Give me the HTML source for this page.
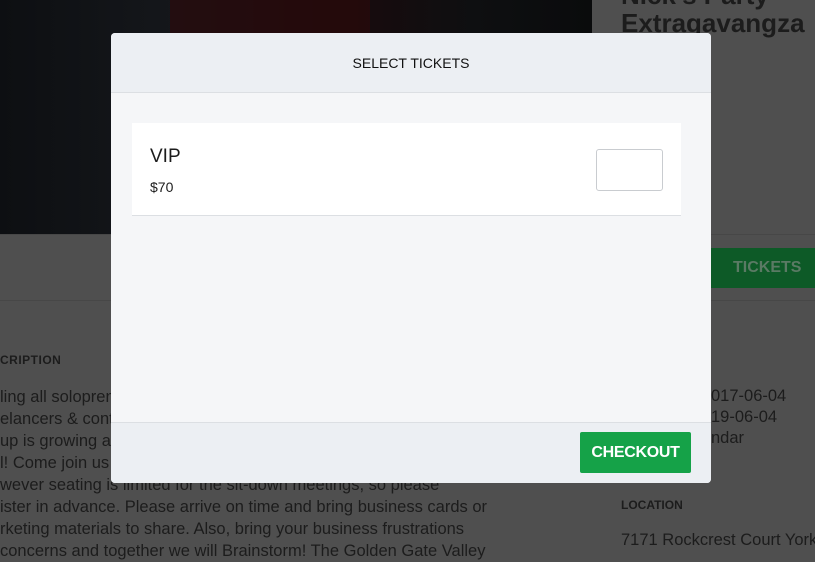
<!DOCTYPE html>
<html><head><style>
*{margin:0;padding:0;box-sizing:border-box}
body{width:815px;height:554px;overflow:hidden;background:#4f4f4f;font-family:"Liberation Sans",sans-serif;position:relative;color:#1e1e1e}
.a{position:absolute}
.t{position:absolute;color:#1c1c1c;white-space:nowrap}
</style></head><body>
<div class="a" style="left:0;top:0;width:592px;height:234px;background:linear-gradient(90deg,#0d0f12 0%,#15171b 30%,#1a0a0c 55%,#0e0f11 80%,#0a0b0c 100%)"></div>
<div class="a" style="left:170px;top:0;width:200px;height:40px;background:#2a0a0c;opacity:.7"></div>
<div class="a" style="left:0;top:234px;width:815px;height:1px;background:#474747"></div>
<div class="a" style="left:0;top:300px;width:815px;height:1px;background:#474747"></div>
<div class="t" style="left:621px;top:-20px;font-size:26px;font-weight:bold;line-height:30px">Nick's Party</div>
<div class="t" style="left:621px;top:8px;font-size:26px;font-weight:bold;line-height:30px">Extragavangza</div>
<div class="a" style="left:711px;top:248px;width:104px;height:40px;background:#0d5a27"></div>
<div class="t" style="left:733px;top:259px;font-size:16px;font-weight:bold;color:#5a7a64">TICKETS</div>
<div class="t" style="left:0;top:353px;font-size:12px;font-weight:bold;letter-spacing:.5px">CRIPTION</div>
<div class="t" style="left:678px;top:353px;font-size:12px;font-weight:bold">E</div>
<div class="t" style="left:0;top:386px;font-size:16.5px;line-height:22px">ling all solopren<br>elancers &amp; cont<br>up is growing a<br>l! Come join us<br>wever seating is limited for the sit-down meetings, so please<br>ister in advance. Please arrive on time and bring business cards or<br>rketing materials to share. Also, bring your business frustrations<br>concerns and together we will Brainstorm! The Golden Gate Valley</div>
<div class="t" style="left:711px;top:386px;font-size:16.5px;line-height:21px">017-06-04<br>19-06-04<br>ndar</div>
<div class="t" style="left:621px;top:498px;font-size:12px;font-weight:bold">LOCATION</div>
<div class="t" style="left:621px;top:531px;font-size:16.5px">7171 Rockcrest Court Yorkt</div>

<div class="a" style="left:111px;top:33px;width:600px;height:450px;background:#f5f6f8;border-radius:4px;overflow:hidden">
 <div class="a" style="left:0;top:0;width:600px;height:60px;background:#eceff3;border-bottom:1px solid #dcdfe3"></div>
 <div class="t" style="left:0;width:600px;text-align:center;top:22px;font-size:14px;color:#111">SELECT TICKETS</div>
 <div class="a" style="left:21px;top:90px;width:549px;height:93px;background:#fff;border-bottom:1px solid #dcdfe3"></div>
 <div class="t" style="left:39px;top:113px;font-size:19px">VIP</div>
 <div class="t" style="left:39px;top:146px;font-size:14px">$70</div>
 <div class="a" style="left:485px;top:116px;width:67px;height:42px;border:1px solid #c9ccd0;border-radius:3px;background:#fff"></div>
 <div class="a" style="left:0;top:389px;width:600px;height:61px;background:#eceff3;border-top:1px solid #dcdfe3"></div>
 <div class="a" style="left:469px;top:399px;width:111px;height:41px;background:#15a248;border-radius:2px"></div>
 <div class="t" style="left:469px;width:111px;text-align:center;top:411px;font-size:16px;font-weight:bold;color:#fff;letter-spacing:-.3px">CHECKOUT</div>
</div>
</body></html>
